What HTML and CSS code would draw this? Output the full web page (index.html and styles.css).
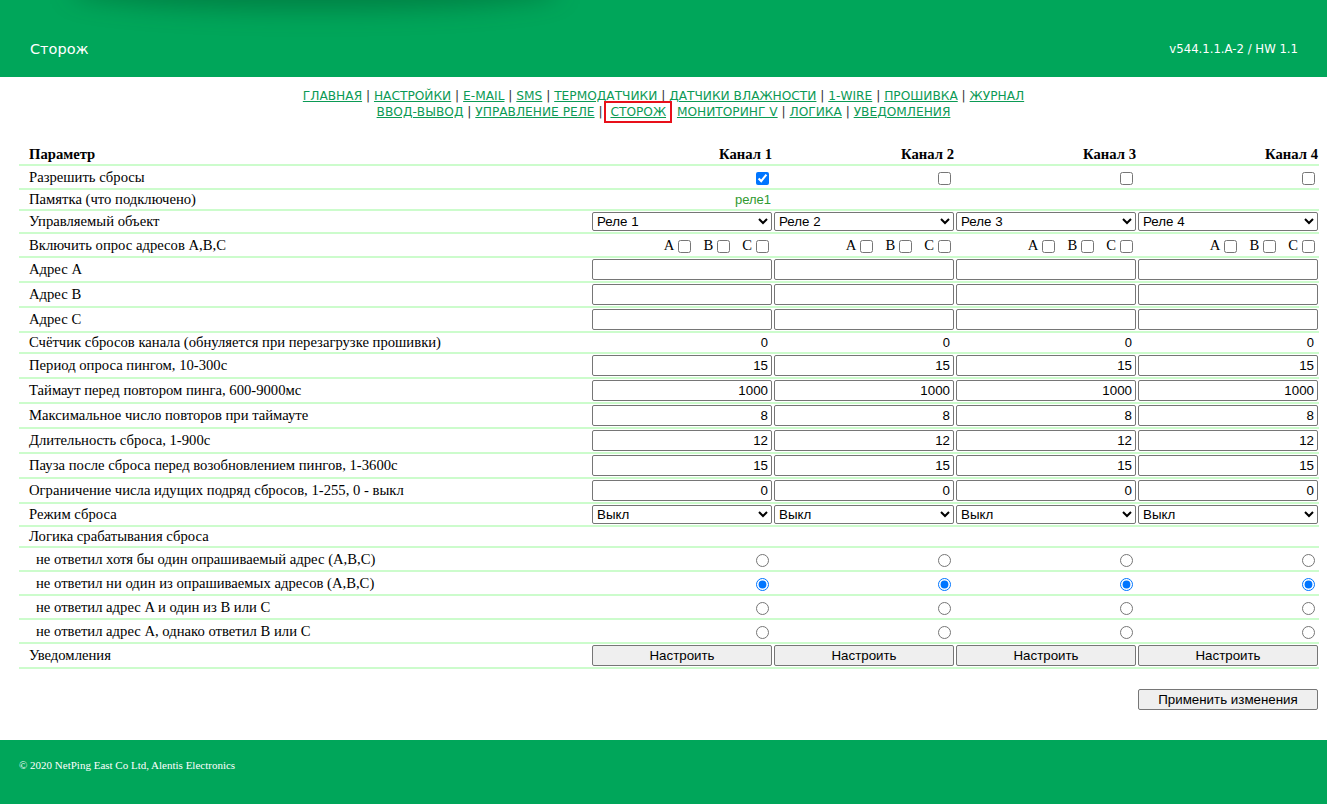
FILE: index.html
```html
<!DOCTYPE html>
<html lang="ru">
<head>
<meta charset="utf-8">
<title>Сторож</title>
<link rel="stylesheet" href="styles.css">
</head>
<body>
<header class="topbar">
  <div class="title">Сторож</div>
  <div class="version">v544.1.1.A-2 / HW 1.1</div>
</header>

<nav class="nav">
  <div class="nav-line">
    <a href="#">ГЛАВНАЯ</a> | <a href="#">НАСТРОЙКИ</a> | <a href="#">E-MAIL</a> | <a href="#">SMS</a> | <a href="#">ТЕРМОДАТЧИКИ</a> | <a href="#">ДАТЧИКИ ВЛАЖНОСТИ</a> | <a href="#">1-WIRE</a> | <a href="#">ПРОШИВКА</a> | <a href="#">ЖУРНАЛ</a>
  </div>
  <div class="nav-line">
    <a href="#">ВВОД-ВЫВОД</a> | <a href="#">УПРАВЛЕНИЕ РЕЛЕ</a> | <a href="#" class="current">СТОРОЖ</a> <a href="#">МОНИТОРИНГ V</a> | <a href="#">ЛОГИКА</a> | <a href="#">УВЕДОМЛЕНИЯ</a>
  </div>
</nav>

<main class="content">
<table class="grid">
  <colgroup><col class="c-param"><col class="c-ch"><col class="c-ch"><col class="c-ch"><col class="c-ch"></colgroup>
  <thead>
    <tr class="r-text"><th class="param">Параметр</th><th>Канал 1</th><th>Канал 2</th><th>Канал 3</th><th>Канал 4</th></tr>
  </thead>
  <tbody>
    <tr class="r-check"><td class="param">Разрешить сбросы</td><td><input type="checkbox" checked></td><td><input type="checkbox"></td><td><input type="checkbox"></td><td><input type="checkbox"></td></tr>
    <tr class="r-text"><td class="param">Памятка (что подключено)</td><td><span class="memo">реле1</span></td><td></td><td></td><td></td></tr>
    <tr class="r-select"><td class="param">Управляемый объект</td>
      <td><select><option>Реле 1</option></select></td>
      <td><select><option>Реле 2</option></select></td>
      <td><select><option>Реле 3</option></select></td>
      <td><select><option>Реле 4</option></select></td></tr>
    <tr class="r-check"><td class="param">Включить опрос адресов A,B,C</td>
      <td><span class="abc">A<input type="checkbox"></span><span class="abc">B<input type="checkbox"></span><span class="abc">C<input type="checkbox"></span></td>
      <td><span class="abc">A<input type="checkbox"></span><span class="abc">B<input type="checkbox"></span><span class="abc">C<input type="checkbox"></span></td>
      <td><span class="abc">A<input type="checkbox"></span><span class="abc">B<input type="checkbox"></span><span class="abc">C<input type="checkbox"></span></td>
      <td><span class="abc">A<input type="checkbox"></span><span class="abc">B<input type="checkbox"></span><span class="abc">C<input type="checkbox"></span></td></tr>
    <tr class="r-input"><td class="param">Адрес A</td><td><input type="text" class="field"></td><td><input type="text" class="field"></td><td><input type="text" class="field"></td><td><input type="text" class="field"></td></tr>
    <tr class="r-input"><td class="param">Адрес B</td><td><input type="text" class="field"></td><td><input type="text" class="field"></td><td><input type="text" class="field"></td><td><input type="text" class="field"></td></tr>
    <tr class="r-input"><td class="param">Адрес C</td><td><input type="text" class="field"></td><td><input type="text" class="field"></td><td><input type="text" class="field"></td><td><input type="text" class="field"></td></tr>
    <tr class="r-text"><td class="param">Счётчик сбросов канала (обнуляется при перезагрузке прошивки)</td><td><span class="count">0</span></td><td><span class="count">0</span></td><td><span class="count">0</span></td><td><span class="count">0</span></td></tr>
    <tr class="r-input"><td class="param">Период опроса пингом, 10-300с</td><td><input type="text" class="field num" value="15"></td><td><input type="text" class="field num" value="15"></td><td><input type="text" class="field num" value="15"></td><td><input type="text" class="field num" value="15"></td></tr>
    <tr class="r-input"><td class="param">Таймаут перед повтором пинга, 600-9000мс</td><td><input type="text" class="field num" value="1000"></td><td><input type="text" class="field num" value="1000"></td><td><input type="text" class="field num" value="1000"></td><td><input type="text" class="field num" value="1000"></td></tr>
    <tr class="r-input"><td class="param">Максимальное число повторов при таймауте</td><td><input type="text" class="field num" value="8"></td><td><input type="text" class="field num" value="8"></td><td><input type="text" class="field num" value="8"></td><td><input type="text" class="field num" value="8"></td></tr>
    <tr class="r-input"><td class="param">Длительность сброса, 1-900с</td><td><input type="text" class="field num" value="12"></td><td><input type="text" class="field num" value="12"></td><td><input type="text" class="field num" value="12"></td><td><input type="text" class="field num" value="12"></td></tr>
    <tr class="r-input"><td class="param">Пауза после сброса перед возобновлением пингов, 1-3600с</td><td><input type="text" class="field num" value="15"></td><td><input type="text" class="field num" value="15"></td><td><input type="text" class="field num" value="15"></td><td><input type="text" class="field num" value="15"></td></tr>
    <tr class="r-input"><td class="param">Ограничение числа идущих подряд сбросов, 1-255, 0 - выкл</td><td><input type="text" class="field num" value="0"></td><td><input type="text" class="field num" value="0"></td><td><input type="text" class="field num" value="0"></td><td><input type="text" class="field num" value="0"></td></tr>
    <tr class="r-select"><td class="param">Режим сброса</td>
      <td><select><option>Выкл</option></select></td>
      <td><select><option>Выкл</option></select></td>
      <td><select><option>Выкл</option></select></td>
      <td><select><option>Выкл</option></select></td></tr>
    <tr class="r-text"><td class="param">Логика срабатывания сброса</td><td></td><td></td><td></td><td></td></tr>
    <tr class="r-check"><td class="param sub">не ответил хотя бы один опрашиваемый адрес (A,B,C)</td><td><input type="radio" name="l1"></td><td><input type="radio" name="l2"></td><td><input type="radio" name="l3"></td><td><input type="radio" name="l4"></td></tr>
    <tr class="r-check"><td class="param sub">не ответил ни один из опрашиваемых адресов (A,B,C)</td><td><input type="radio" name="l1" checked></td><td><input type="radio" name="l2" checked></td><td><input type="radio" name="l3" checked></td><td><input type="radio" name="l4" checked></td></tr>
    <tr class="r-check"><td class="param sub">не ответил адрес A и один из B или C</td><td><input type="radio" name="l1"></td><td><input type="radio" name="l2"></td><td><input type="radio" name="l3"></td><td><input type="radio" name="l4"></td></tr>
    <tr class="r-check"><td class="param sub">не ответил адрес A, однако ответил B или C</td><td><input type="radio" name="l1"></td><td><input type="radio" name="l2"></td><td><input type="radio" name="l3"></td><td><input type="radio" name="l4"></td></tr>
    <tr class="r-input"><td class="param">Уведомления</td><td><button class="btn wide">Настроить</button></td><td><button class="btn wide">Настроить</button></td><td><button class="btn wide">Настроить</button></td><td><button class="btn wide">Настроить</button></td></tr>
  </tbody>
</table>

<div class="actions">
  <button class="btn apply">Применить изменения</button>
</div>
</main>

<footer class="footer">© 2020 NetPing East Co Ltd, Alentis Electronics</footer>
</body>
</html>
```

FILE: styles.css
```css
html, body {
  margin: 0;
  padding: 0;
  background: #fff;
}
body {
  font-family: "Liberation Serif", "Times New Roman", serif;
  color: #000;
}

.topbar {
  position: relative;
  height: 77px;
  background: #00a65a;
  color: #fff;
  display: flex;
  align-items: center;
  justify-content: space-between;
  padding: 20px 29px 0 30px;
  box-sizing: border-box;
  overflow: hidden;
}
.topbar::before {
  content: "";
  position: absolute;
  left: 70px;
  top: -30px;
  width: 490px;
  height: 40px;
  border-radius: 50%;
  background: rgba(0, 60, 30, 0.35);
  filter: blur(12px);
}
.title {
  font-family: "DejaVu Sans", Tahoma, sans-serif;
  font-size: 14.5px;
  position: relative;
}
.version {
  font-family: "DejaVu Sans", Tahoma, sans-serif;
  font-size: 11.7px;
  position: relative;
}

.nav {
  text-align: center;
  font-family: "DejaVu Sans", Tahoma, sans-serif;
  font-size: 12.2px;
  line-height: 16px;
  color: #333;
  padding-top: 11px;
}
.nav a {
  color: #0b9a55;
  text-decoration: underline;
}
.nav a.current {
  outline: 2px solid #e8101a;
  padding: 2px 4px;
  margin: 0 3px 0 0;
}

.content {
  padding: 24px 9px 0 19px;
}
.grid {
  width: 1300px;
  border-collapse: collapse;
  table-layout: fixed;
  font-size: 14.67px;
}
.c-param { width: 572px; }
.c-ch { width: 182px; }

.grid th, .grid td {
  border-bottom: 2px solid #ccfccc;
  padding: 0 1px;
  text-align: right;
  vertical-align: middle;
  white-space: nowrap;
  line-height: 17px;
}
.grid th { font-weight: bold; }
.grid th.param, .grid td.param {
  text-align: left;
  padding-left: 10px;
}
.grid td.sub { padding-left: 17px; }

.r-text { height: 21px; }
.r-check { height: 24px; }
.r-select { height: 23px; }
.r-input { height: 25px; }

.grid input[type="checkbox"], .grid input[type="radio"] {
  margin: 0 3px;
  vertical-align: middle;
  width: 13px;
  height: 13px;
}
.abc { margin-left: 9px; }
.abc input[type="checkbox"] { margin-left: 4px; }

.memo {
  font-family: "Liberation Sans", Arial, sans-serif;
  font-size: 13px;
  color: #2f9a2f;
  padding-right: 1px;
}
.count {
  font-family: "Liberation Sans", Arial, sans-serif;
  font-size: 13px;
  padding-right: 4px;
}

.field {
  box-sizing: border-box;
  width: 100%;
  height: 21px;
  margin: 0;
  border: 1px solid #767676;
  border-radius: 2px;
  padding: 1px 3px;
  font-family: "Liberation Sans", Arial, sans-serif;
  font-size: 13.33px;
  vertical-align: middle;
}
.field.num { text-align: right; }

.grid select {
  box-sizing: border-box;
  width: 100%;
  height: 19px;
  margin: 0;
  border: 1px solid #767676;
  border-radius: 2px;
  font-family: "Liberation Sans", Arial, sans-serif;
  font-size: 13.33px;
  background: #fff;
  color: #000;
  vertical-align: middle;
}

.btn {
  font-family: "Liberation Sans", Arial, sans-serif;
  font-size: 13.33px;
  background: #efefef;
  border: 1px solid #767676;
  border-radius: 2px;
  color: #000;
  padding: 1px 6px;
  margin: 0;
}
.btn.wide {
  width: 100%;
  height: 21px;
  vertical-align: middle;
}

.actions {
  display: flex;
  justify-content: flex-end;
  padding: 20px 0 30px 0;
}
.btn.apply {
  width: 180px;
  height: 21px;
}

.footer {
  background: #00a65a;
  color: #fff;
  height: 64px;
  box-sizing: border-box;
  padding: 19px 0 0 19px;
  font-family: "Liberation Serif", "Times New Roman", serif;
  font-size: 11px;
}
```
